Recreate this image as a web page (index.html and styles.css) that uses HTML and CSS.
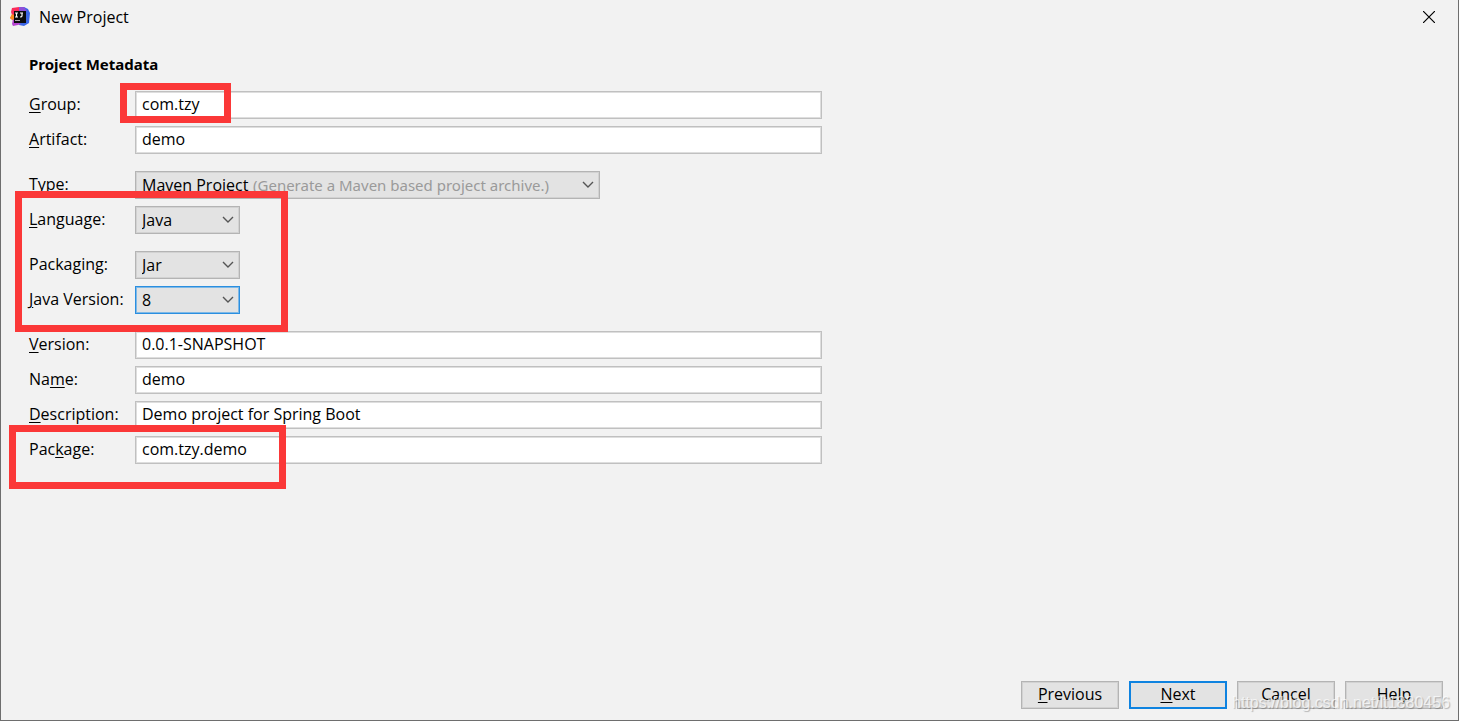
FILE: index.html
```html
<!DOCTYPE html>
<html lang="en">

<head>
    <meta charset="UTF-8">
    <meta name="viewport" content="width=device-width, initial-scale=1.0">
    <title>New Project</title>
    <link rel="stylesheet" href="styles.css">
</head>

<body>
    <div class="dialog">
        <header class="titlebar">
            <svg class="titlebar__logo" viewBox="0 0 20 20" aria-hidden="true">
                <path d="M1 5 L2 1 L9 0 L12 5 L8 14 L3 13 L0 11 L2 8 Z" fill="#fb2a5a" />
                <path d="M0 11 L2 7 L4 8 L5 14 L2 13 Z" fill="#fc8a1e" />
                <path d="M9 4 L14 0 L18 2 L20 6 L19 16 L14 19 L9 18 Z" fill="#3a66e6" />
                <path d="M9 0 L14 0 L17 4 L9 5 Z" fill="#8d4fd8" />
                <path d="M3 12 L6 14 L11 17 L8 18 L3 19 L2 17 Z" fill="#b545cf" />
                <rect x="4" y="4" width="12" height="12" fill="#0b0b0d" />
                <path d="M5 6 H8 M6.500 6 V10 M5 10 H8 M10 6 H13 M12 6 V9 Q12 10 10 10" fill="none" stroke="#fff" stroke-width="1.2" />
                <path d="M5 13.500 H10" stroke="#aaa" stroke-width="1" />
            </svg>
            <h1 class="titlebar__title">New Project</h1>
            <button class="titlebar__close" type="button" aria-label="Close">
                <svg viewBox="0 0 12 12" aria-hidden="true">
                    <path d="M0 0 L12 12 M12 0 L0 12" stroke="#000" stroke-width="1.2" />
                </svg>
            </button>
        </header>

        <form class="form">
            <h2 class="form__heading">Project Metadata</h2>

            <div class="form__group">
                <div class="row">
                    <label class="row__label" for="group"><u>G</u>roup:</label>
                    <input class="field" id="group" type="text" value="com.tzy">
                </div>
                <div class="row">
                    <label class="row__label" for="artifact"><u>A</u>rtifact:</label>
                    <input class="field" id="artifact" type="text" value="demo">
                </div>
                <span class="mark mark--group"></span>
            </div>

            <div class="form__group">
                <div class="row">
                    <label class="row__label" for="type">Type:</label>
                    <div class="select select--wide">
                        <select class="select__box" id="type">
                            <option>Maven Project</option>
                            <option>Gradle Project</option>
                        </select>
                        <span class="select__hint">(Generate a Maven based project archive.)</span>
                        <svg class="select__arrow" viewBox="0 0 12 8" aria-hidden="true">
                            <path d="M1 1 L6 6 L11 1" />
                        </svg>
                    </div>
                </div>
                <div class="row">
                    <label class="row__label" for="language"><u>L</u>anguage:</label>
                    <div class="select">
                        <select class="select__box" id="language">
                            <option>Java</option>
                            <option>Kotlin</option>
                            <option>Groovy</option>
                        </select>
                        <svg class="select__arrow" viewBox="0 0 12 8" aria-hidden="true">
                            <path d="M1 1 L6 6 L11 1" />
                        </svg>
                    </div>
                </div>
                <span class="mark mark--java"></span>
            </div>

            <div class="form__group">
                <div class="row">
                    <label class="row__label" for="packaging">Packa<u>g</u>ing:</label>
                    <div class="select">
                        <select class="select__box" id="packaging">
                            <option>Jar</option>
                            <option>War</option>
                        </select>
                        <svg class="select__arrow" viewBox="0 0 12 8" aria-hidden="true">
                            <path d="M1 1 L6 6 L11 1" />
                        </svg>
                    </div>
                </div>
                <div class="row">
                    <label class="row__label" for="java-version"><u>J</u>ava Version:</label>
                    <div class="select">
                        <select class="select__box select__box--active" id="java-version">
                            <option>8</option>
                            <option>11</option>
                        </select>
                        <svg class="select__arrow" viewBox="0 0 12 8" aria-hidden="true">
                            <path d="M1 1 L6 6 L11 1" />
                        </svg>
                    </div>
                </div>
            </div>

            <div class="form__group">
                <div class="row">
                    <label class="row__label" for="version"><u>V</u>ersion:</label>
                    <input class="field" id="version" type="text" value="0.0.1-SNAPSHOT">
                </div>
                <div class="row">
                    <label class="row__label" for="name">Na<u>m</u>e:</label>
                    <input class="field" id="name" type="text" value="demo">
                </div>
                <div class="row">
                    <label class="row__label" for="description"><u>D</u>escription:</label>
                    <input class="field" id="description" type="text" value="Demo project for Spring Boot">
                </div>
                <div class="row">
                    <label class="row__label" for="package">Pac<u>k</u>age:</label>
                    <input class="field" id="package" type="text" value="com.tzy.demo">
                </div>
                <span class="mark mark--package"></span>
            </div>
        </form>

        <footer class="footer">
            <button class="button" type="button"><u>P</u>revious</button>
            <button class="button button--default" type="button"><u>N</u>ext</button>
            <button class="button" type="button">Cancel</button>
            <button class="button" type="button">Help</button>
            <span class="watermark">https://blog.csdn.net/lt1880456</span>
        </footer>
    </div>
</body>

</html>
```
FILE: styles.css
```css
* {
    box-sizing: border-box;
}

body {
    margin: 0;
    font-family: 'Open Sans', 'Noto Sans', sans-serif;
    font-size: 16px;
    line-height: 20px;
    color: #000;
    background-color: #f2f2f2;
}

u {
    text-underline-offset: 2px;
}

.dialog {
    display: flex;
    flex-direction: column;
    min-height: 100vh;
    border: 1px solid #6e6e6e;
    border-top: 0;
}

.titlebar {
    display: flex;
    align-items: center;
    height: 34px;
    padding: 0 16px 0 9px;
}

.titlebar__logo {
    width: 20px;
    height: 20px;
}

.titlebar__title {
    flex: 1;
    margin: 0 0 0 9px;
    font-size: 16px;
    font-weight: 400;
}

.titlebar__close {
    display: flex;
    padding: 7px;
    border: 0;
    background: none;
    cursor: pointer;
}

.titlebar__close svg {
    width: 12px;
    height: 12px;
}

.form {
    display: flex;
    flex-direction: column;
    gap: 17px;
    flex: 1;
    width: 100%;
    max-width: 821px;
    padding: 20px 0 0 28px;
}

.form__heading {
    margin: 0;
    font-family: 'Noto Sans', sans-serif;
    font-size: 15px;
    font-weight: 700;
}

.form__group {
    position: relative;
    display: flex;
    flex-direction: column;
    gap: 7px;
}

.row {
    display: flex;
    align-items: center;
}

.row__label {
    flex: none;
    width: 106px;
    padding-bottom: 2px;
}

.field {
    flex: 1;
    min-width: 0;
    height: 28px;
    padding: 0 6px 2px;
    border: 1px solid #c0c0c0;
    box-shadow: inset 0 0 0 1px #dedede;
    background-color: #fff;
    font: inherit;
    color: #000;
    outline: 0;
}

.select {
    position: relative;
    width: 105px;
}

.select--wide {
    width: 465px;
}

.select__box {
    display: block;
    appearance: none;
    width: 100%;
    height: 28px;
    padding: 0 6px;
    border: 1px solid #b4b4b4;
    border-radius: 0;
    box-shadow: inset 0 0 0 1px #d2d2d2;
    background-color: #e3e3e3;
    font: inherit;
    color: #000;
}

.select__box--active {
    border-color: #2b8fe0;
    box-shadow: inset 0 0 0 1px #80b9e6;
}

.select__hint {
    position: absolute;
    top: 4px;
    left: 118px;
    font-family: 'Noto Sans', sans-serif;
    font-size: 15px;
    color: #9a9a9a;
    pointer-events: none;
}

.select__arrow {
    position: absolute;
    top: 10px;
    right: 6px;
    width: 12px;
    height: 8px;
    fill: none;
    stroke: #555;
    stroke-width: 1.4;
    pointer-events: none;
}

/* red highlight frames drawn over the form */
.mark {
    position: absolute;
    border: 7px solid #fb3838;
    pointer-events: none;
}

.mark--group {
    top: -8px;
    left: 91px;
    width: 111px;
    height: 40px;
}

.mark--java {
    z-index: 1;
    top: 20px;
    left: -14px;
    width: 273px;
    height: 141px;
}

.mark--package {
    top: 94px;
    left: -20px;
    width: 277px;
    height: 64px;
}

.footer {
    position: relative;
    display: flex;
    justify-content: flex-end;
    gap: 10px;
    padding: 0 15px 11px;
}

.button {
    width: 98px;
    height: 28px;
    padding: 0 0 2px;
    border: 1px solid #b4b4b4;
    box-shadow: inset 0 0 0 1px #d2d2d2;
    background-color: #e3e3e3;
    font: inherit;
    color: #000;
    cursor: pointer;
}

.button--default {
    border-color: #0f83e0;
    box-shadow: inset 0 0 0 1px #0f83e0;
}

.watermark {
    position: absolute;
    right: 8px;
    bottom: 7px;
    font-family: 'Liberation Sans', Arial, sans-serif;
    font-size: 16px;
    color: rgba(255, 255, 255, 0.7);
    text-shadow: 1px 1px 1px rgba(0, 0, 0, 0.25);
    pointer-events: none;
}
```
